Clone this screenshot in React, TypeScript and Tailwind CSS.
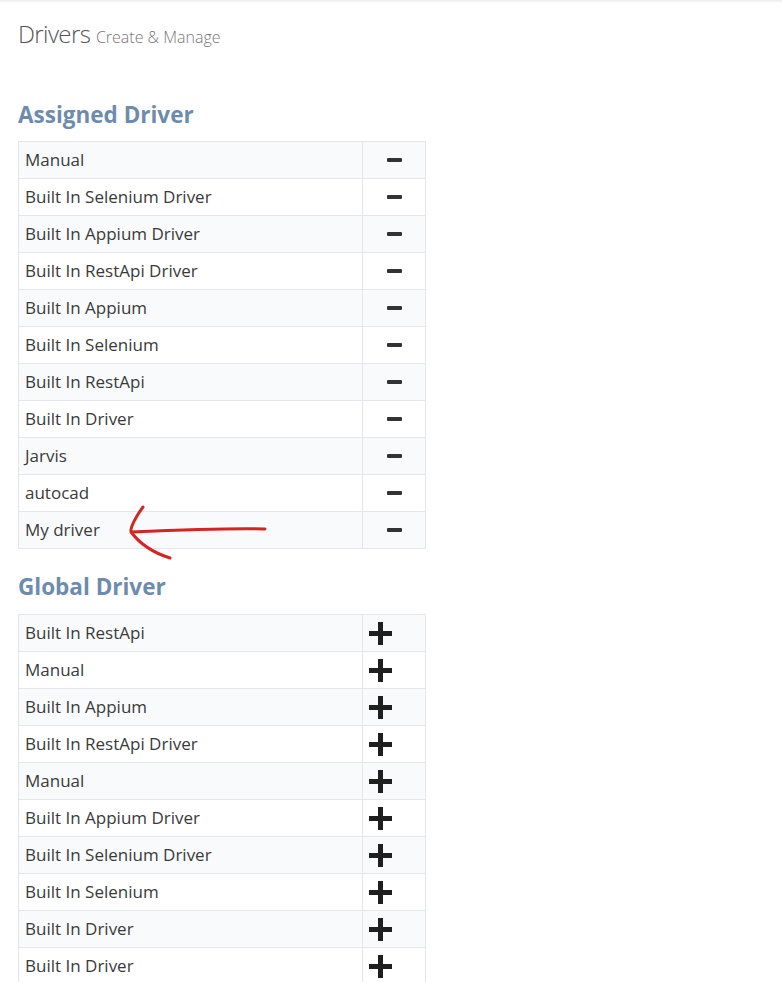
import React from "react"

const assigned = [
  "Manual",
  "Built In Selenium Driver",
  "Built In Appium Driver",
  "Built In RestApi Driver",
  "Built In Appium",
  "Built In Selenium",
  "Built In RestApi",
  "Built In Driver",
  "Jarvis",
  "autocad",
  "My driver",
]

const global = [
  "Built In RestApi",
  "Manual",
  "Built In Appium",
  "Built In RestApi Driver",
  "Manual",
  "Built In Appium Driver",
  "Built In Selenium Driver",
  "Built In Selenium",
  "Built In Driver",
  "Built In Driver",
]

function MinusIcon() {
  return <span className="block h-[4px] w-[15px] rounded-[1px] bg-[#333]" />
}

function PlusIcon() {
  return (
    <svg width="25" height="25" viewBox="0 0 25 25" className="block">
      <path d="M10 1h5v9h9v5h-9v9h-5v-9H1v-5h9z" fill="#1f1f1f" />
    </svg>
  )
}

function DriverTable({ items, kind }: { items: string[]; kind: "remove" | "add" }) {
  return (
    <table className="w-[408px] border-collapse border border-[#e3e6ea] text-[17px] text-[#3a3a3a]">
      <tbody>
        {items.map((name, i) => (
          <tr key={i} className={i % 2 === 0 ? "bg-[#f9fafc]" : "bg-white"}>
            <td className="h-[37px] border border-[#e3e6ea] pl-[6px] leading-[22px]">{name}</td>
            <td className="h-[37px] w-[63px] border border-[#e3e6ea]">
              {kind === "remove" ? (
                <div className="flex justify-center pl-[1px]">
                  <MinusIcon />
                </div>
              ) : (
                <div className="flex justify-start pl-[5px]">
                  <PlusIcon />
                </div>
              )}
            </td>
          </tr>
        ))}
      </tbody>
    </table>
  )
}

export default function App() {
  return (
    <div className="relative min-h-[982px] bg-white" style={{ fontFamily: '"Open Sans", "Noto Sans", sans-serif' }}>
      <div className="h-[3px] bg-gradient-to-b from-[#ececec] to-white" />
      <div className="px-[18px]">
        <h1 className="pt-[14px] text-[24px] font-light leading-[34px] tracking-[-0.6px] text-[#555]">
          Drivers <span className="text-[16px] tracking-normal text-[#777]">Create &amp; Manage</span>
        </h1>

        <h2 className="mt-[44px] mb-[9px] text-[22.5px] font-bold leading-[34px] text-[#6d8cad]">Assigned Driver</h2>
        <div className="relative">
          <DriverTable items={assigned} kind="remove" />
          <svg
            className="pointer-events-none absolute left-[100px] top-[361px]"
            width="160"
            height="65"
            viewBox="0 0 160 65"
            fill="none"
          >
            <path
              d="M147 27 C120 26 60 28 13 30 M25 5 C19 13 12 25 13 30 C22 42 36 51 52 56"
              stroke="#d42424"
              strokeWidth="3"
              strokeLinecap="round"
              strokeLinejoin="round"
            />
          </svg>
        </div>

        <h2 className="mt-[21px] mb-[10px] text-[22.5px] font-bold leading-[34px] text-[#6d8cad]">Global Driver</h2>
        <DriverTable items={global} kind="add" />
      </div>
    </div>
  )
}
